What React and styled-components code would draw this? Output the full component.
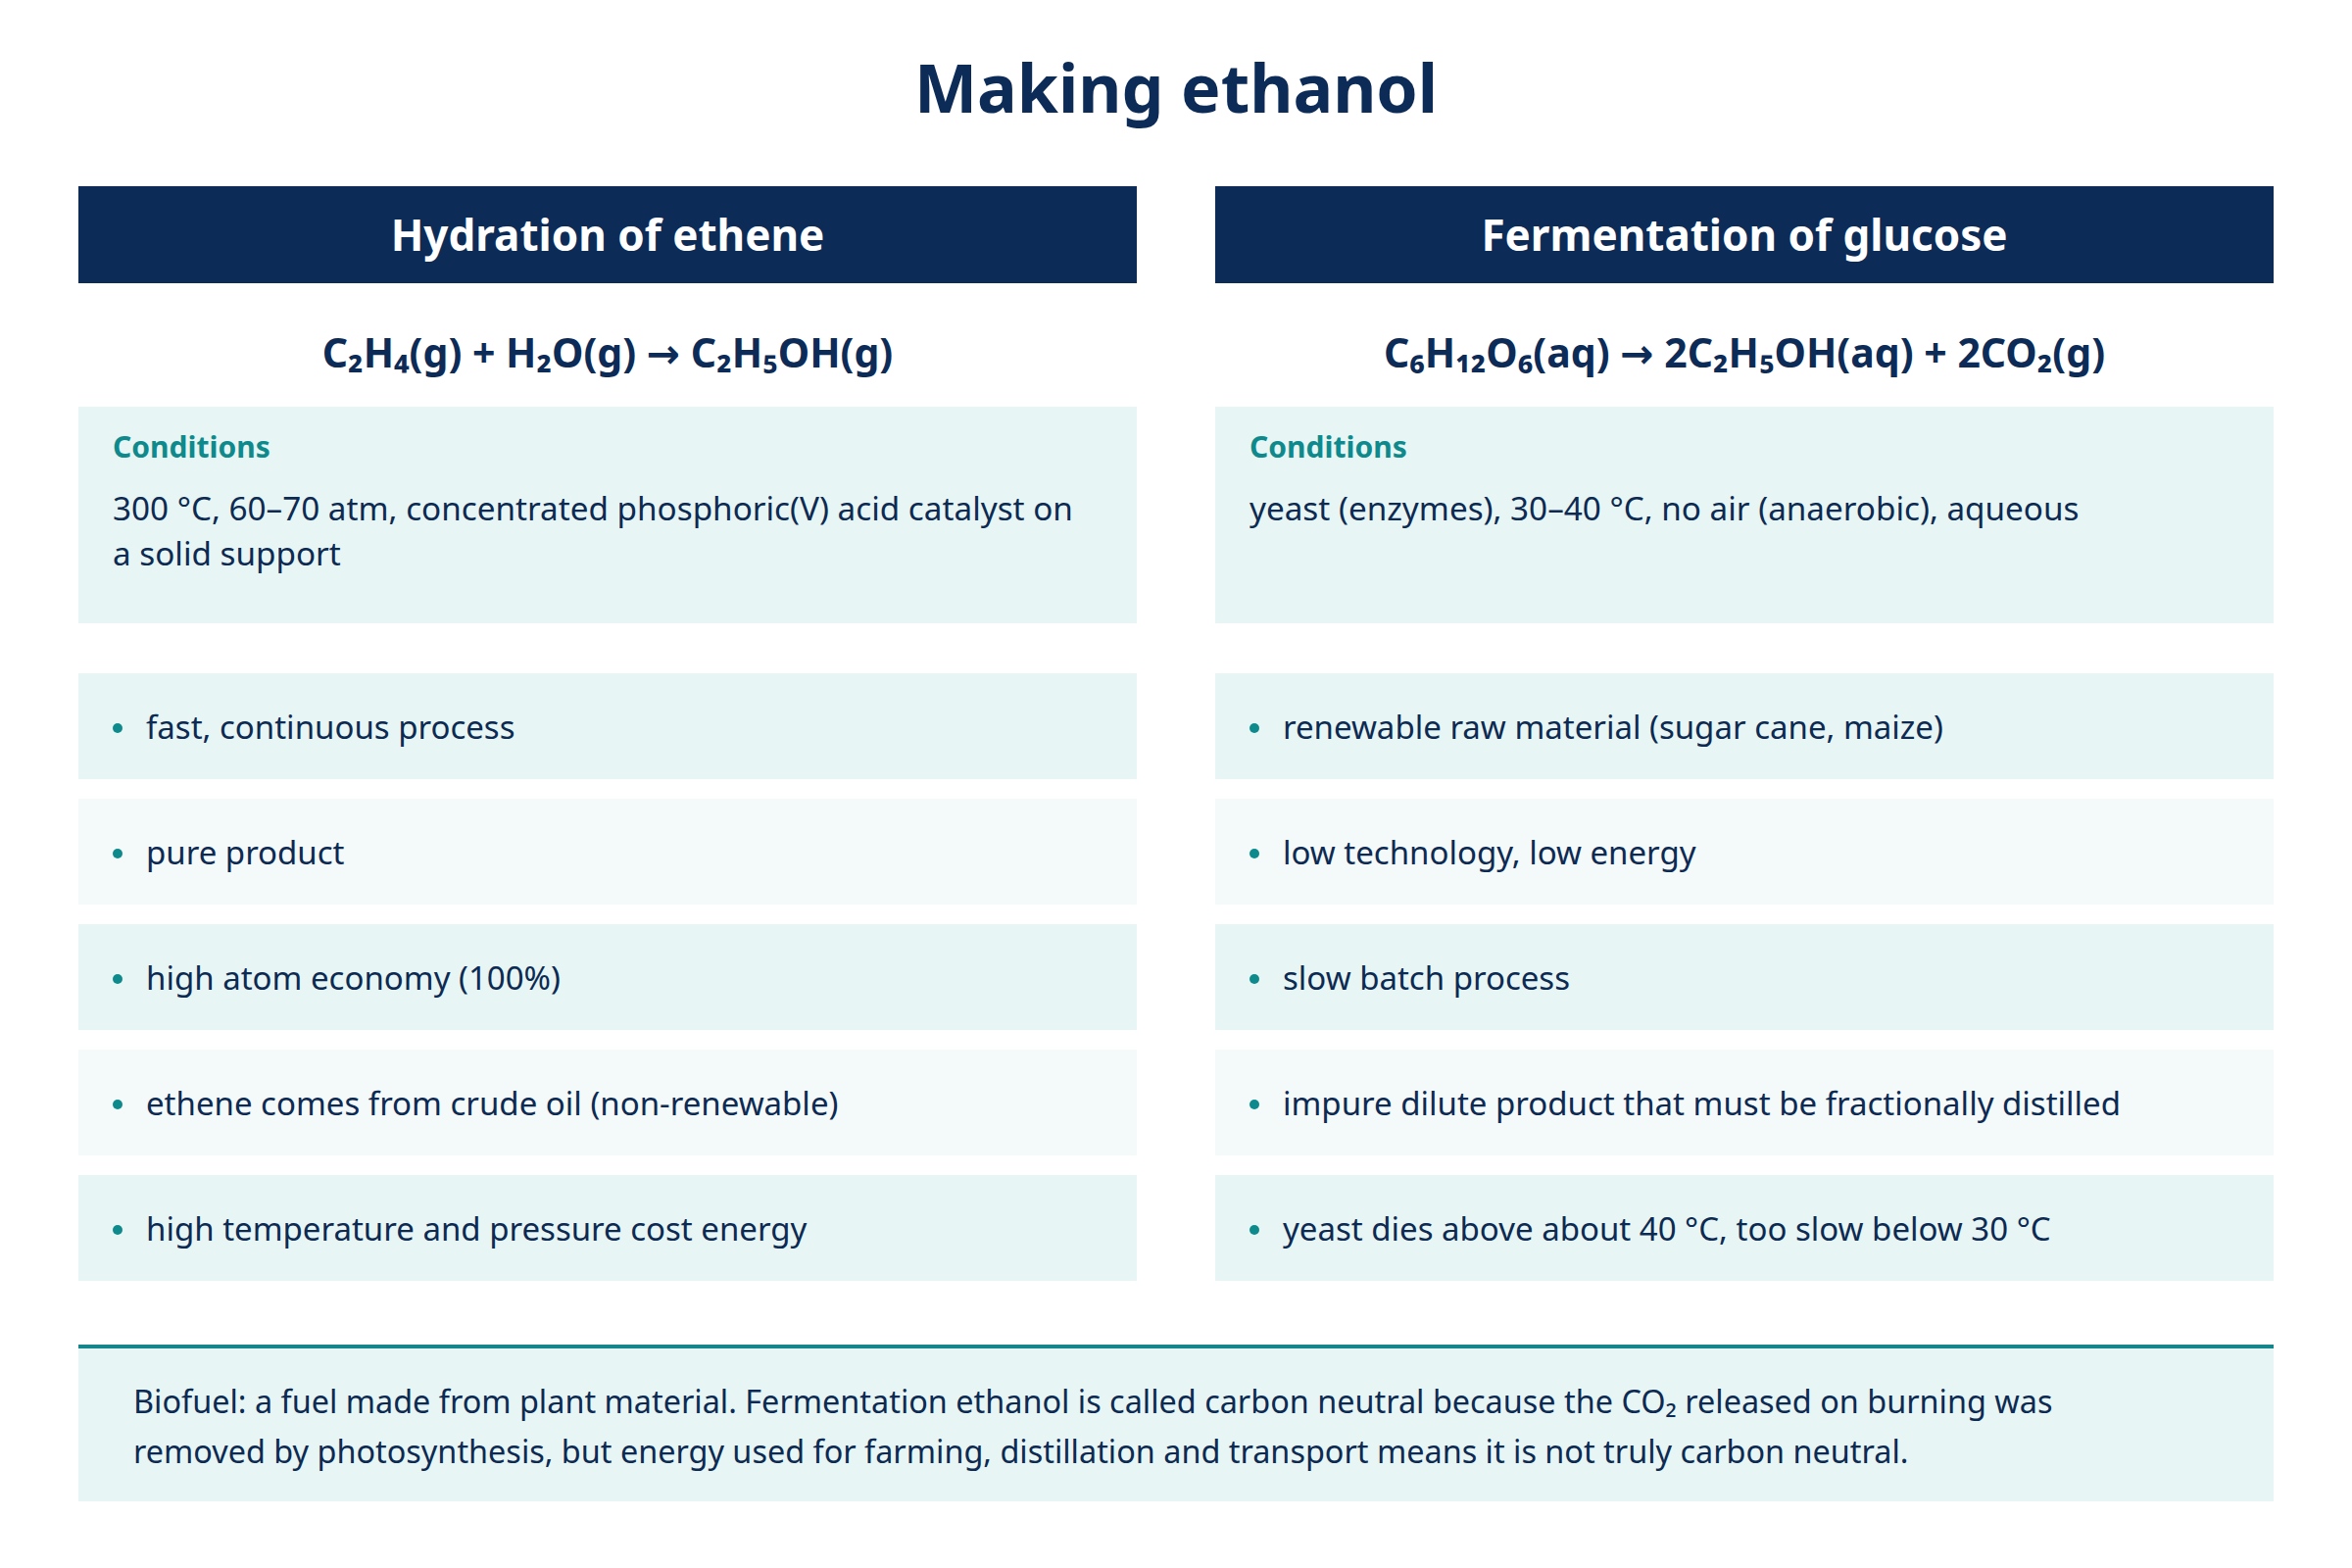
import React from "react";
import styled, { createGlobalStyle } from "styled-components";

const GlobalStyle = createGlobalStyle`
  html, body {
    margin: 0;
    padding: 0;
    background: #ffffff;
  }
  body {
    font-family: "Noto Sans", "Open Sans", "DejaVu Sans", sans-serif;
    color: #0d2a52;
  }
`;

const Page = styled.main`
  width: 2400px;
  box-sizing: border-box;
  padding: 48px 80px 60px;
`;

const Title = styled.h1`
  margin: 0 0 60px;
  text-align: center;
  font-size: 68px;
  line-height: 1.2;
  font-weight: 700;
  color: #0c2b57;
`;

const Columns = styled.div`
  display: grid;
  grid-template-columns: 1fr 1fr;
  column-gap: 80px;
`;

const Column = styled.section`
  display: flex;
  flex-direction: column;
`;

const Header = styled.h2`
  margin: 0;
  height: 99px;
  display: flex;
  align-items: center;
  justify-content: center;
  background: #0c2b57;
  color: #ffffff;
  font-size: 44px;
  font-weight: 700;
`;

const Equation = styled.div`
  padding: 44px 0 30px;
  height: 126px;
  box-sizing: border-box;
  text-align: center;
  font-size: 41px;
  line-height: 1.3;
  font-weight: 700;
  color: #0c2b57;
`;

const Conditions = styled.div`
  box-sizing: border-box;
  min-height: 221px;
  padding: 20px 42px 19px 35px;
  background: #e7f6f5;
`;

const Label = styled.div`
  font-size: 30px;
  line-height: 1.4;
  font-weight: 700;
  color: #0f8a8c;
  margin-bottom: 18px;
`;

const CondText = styled.p`
  margin: 0;
  font-size: 33.25px;
  line-height: 46px;
  color: #0d2a52;
`;

const List = styled.ul`
  list-style: none;
  margin: 51px 0 0;
  padding: 0;
  display: flex;
  flex-direction: column;
  gap: 20px;
`;

const Item = styled.li`
  height: 108px;
  box-sizing: border-box;
  display: flex;
  align-items: center;
  padding: 3px 35px 0;
  background: ${(p) => (p.$alt ? "#f4f9fa" : "#e7f6f5")};
  font-size: 33px;
  line-height: 1.5;
  color: #0d2a52;
`;

const Dot = styled.span`
  flex: none;
  width: 10px;
  height: 10px;
  border-radius: 50%;
  background: #0f8a8c;
  margin: 0 24px 0 0;
  position: relative;
  top: 1px;
`;

const Note = styled.div`
  margin-top: 65px;
  border-top: 4px solid #17868c;
  background: #e7f6f5;
  padding: 28px 56px 26px;
`;

const NoteText = styled.p`
  margin: 0;
  max-width: 2000px;
  font-size: 32.4px;
  line-height: 51px;
  color: #0d2a52;
`;

const columns = [
  {
    title: "Hydration of ethene",
    equation: "C₂H₄(g) + H₂O(g) → C₂H₅OH(g)",
    conditions:
      "300 °C, 60–70 atm, concentrated phosphoric(V) acid catalyst on a solid support",
    items: [
      "fast, continuous process",
      "pure product",
      "high atom economy (100%)",
      "ethene comes from crude oil (non-renewable)",
      "high temperature and pressure cost energy",
    ],
  },
  {
    title: "Fermentation of glucose",
    equation: "C₆H₁₂O₆(aq) → 2C₂H₅OH(aq) + 2CO₂(g)",
    conditions: "yeast (enzymes), 30–40 °C, no air (anaerobic), aqueous",
    items: [
      "renewable raw material (sugar cane, maize)",
      "low technology, low energy",
      "slow batch process",
      "impure dilute product that must be fractionally distilled",
      "yeast dies above about 40 °C, too slow below 30 °C",
    ],
  },
];

export default function App() {
  return (
    <>
      <GlobalStyle />
      <Page>
        <Title>Making ethanol</Title>
        <Columns>
          {columns.map((c) => (
            <Column key={c.title}>
              <Header>{c.title}</Header>
              <Equation>{c.equation}</Equation>
              <Conditions>
                <Label>Conditions</Label>
                <CondText>{c.conditions}</CondText>
              </Conditions>
              <List>
                {c.items.map((it, i) => (
                  <Item key={it} $alt={i % 2 === 1}>
                    <Dot />
                    {it}
                  </Item>
                ))}
              </List>
            </Column>
          ))}
        </Columns>
        <Note>
          <NoteText>
            Biofuel: a fuel made from plant material. Fermentation ethanol is
            called carbon neutral because the CO₂ released on burning was
            removed by photosynthesis, but energy used for farming,
            distillation and transport means it is not truly carbon neutral.
          </NoteText>
        </Note>
      </Page>
    </>
  );
}
